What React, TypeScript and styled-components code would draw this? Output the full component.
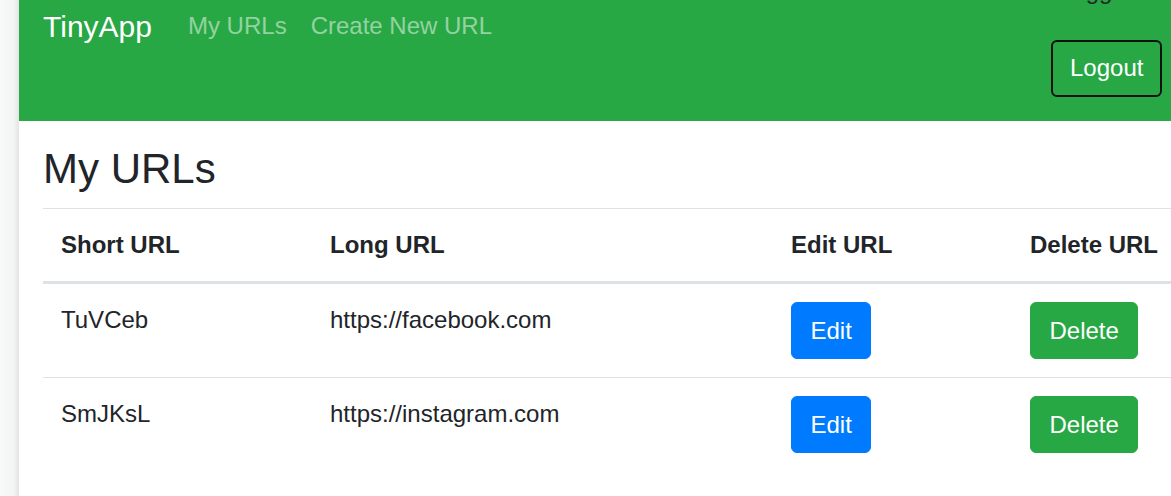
import React from "react";
import styled, { createGlobalStyle } from "styled-components";

const GlobalStyle = createGlobalStyle`
  html, body {
    margin: 0;
    padding: 0;
    overflow: hidden;
    background: #ffffff;
  }
  body {
    font-family: "Liberation Sans", Arial, sans-serif;
    font-size: 24px;
    line-height: 1.5;
    color: #212529;
  }
  * { box-sizing: border-box; }
`;

const Shell = styled.div`
  display: flex;
  min-height: 496px;
  width: 1171px;
  overflow: hidden;
`;

const Gutter = styled.div`
  flex: 0 0 19px;
  background: linear-gradient(to right, #f8f9f9 0%, #f3f4f4 70%, #e3e5e5 100%);
`;

const Page = styled.div`
  flex: 1;
  min-width: 0;
  overflow: hidden;
  background: #ffffff;
`;

const Navbar = styled.nav`
  display: flex;
  align-items: flex-start;
  background: #28a745;
  padding: 0 8px 24.5px 24px;
`;

const Brand = styled.a`
  font-size: 30px;
  line-height: 45px;
  color: #ffffff;
  text-decoration: none;
  margin-top: 4px;
  margin-right: 24px;
  white-space: nowrap;
`;

const NavList = styled.div`
  display: flex;
  margin-top: 8px;
`;

const NavLink = styled.a`
  font-size: 24px;
  line-height: 36px;
  padding: 0 12px;
  color: rgba(255, 255, 255, 0.5);
  text-decoration: none;
  white-space: nowrap;
`;

const UserBox = styled.div`
  margin-left: auto;
  margin-top: -27px;
  width: 112px;
  display: flex;
  flex-direction: column;
  align-items: flex-start;
`;

const UserText = styled.span`
  line-height: 36px;
  padding-left: 8px;
  white-space: nowrap;
  color: #212529;
`;

const OutlineButton = styled.button`
  margin-top: 30.5px;
  font-family: inherit;
  font-size: 24px;
  line-height: 36px;
  padding: 8.5px 17px;
  color: #ffffff;
  background: transparent;
  border: 2px solid #111111;
  border-radius: 6px;
  white-space: nowrap;
`;

const Main = styled.main`
  padding: 0 0 0 24px;
`;

const Title = styled.h1`
  font-size: 42px;
  font-weight: 400;
  line-height: 50px;
  margin: 23px 0 14px 0;
  color: #212529;
`;

const Table = styled.table`
  width: 1133px;
  table-layout: fixed;
  border-collapse: separate;
  border-spacing: 0;
`;

const Th = styled.th`
  text-align: left;
  font-weight: 700;
  padding: 18px;
  line-height: 36px;
  vertical-align: bottom;
  border-top: 1px solid #dee2e6;
  border-bottom: 3px solid #dee2e6;
  white-space: nowrap;
`;

const Row = styled.tr`
  & + & > td {
    border-top: 1px solid #dee2e6;
  }
`;

const Td = styled.td`
  padding: 18px;
  line-height: 36px;
  vertical-align: top;
  white-space: nowrap;
`;

const ActionButton = styled.button<{ $variant: "primary" | "success" }>`
  display: inline-block;
  font-family: inherit;
  font-size: 24px;
  line-height: 36px;
  padding: 9.5px 18.5px;
  color: #ffffff;
  border: 1px solid ${(p) => (p.$variant === "primary" ? "#007bff" : "#28a745")};
  background: ${(p) => (p.$variant === "primary" ? "#007bff" : "#28a745")};
  border-radius: 6px;
  vertical-align: top;
`;

const urls = [
  { short: "TuVCeb", long: "https://facebook.com" },
  { short: "SmJKsL", long: "https://instagram.com" },
];

export default function App() {
  return (
    <>
      <GlobalStyle />
      <Shell>
        <Gutter />
        <Page>
          <Navbar>
            <Brand href="#">TinyApp</Brand>
            <NavList>
              <NavLink href="#">My URLs</NavLink>
              <NavLink href="#">Create New URL</NavLink>
            </NavList>
            <UserBox>
              <UserText>Logged in as: user@example.com</UserText>
              <OutlineButton>Logout</OutlineButton>
            </UserBox>
          </Navbar>
          <Main>
            <Title>My URLs</Title>
            <Table>
              <colgroup>
                <col style={{ width: 269 }} />
                <col style={{ width: 461 }} />
                <col style={{ width: 239 }} />
                <col style={{ width: 164 }} />
              </colgroup>
              <thead>
                <tr>
                  <Th>Short URL</Th>
                  <Th>Long URL</Th>
                  <Th>Edit URL</Th>
                  <Th>Delete URL</Th>
                </tr>
              </thead>
              <tbody>
                {urls.map((u) => (
                  <Row key={u.short}>
                    <Td>{u.short}</Td>
                    <Td>{u.long}</Td>
                    <Td>
                      <ActionButton $variant="primary">Edit</ActionButton>
                    </Td>
                    <Td>
                      <ActionButton $variant="success">Delete</ActionButton>
                    </Td>
                  </Row>
                ))}
              </tbody>
            </Table>
          </Main>
        </Page>
      </Shell>
    </>
  );
}
